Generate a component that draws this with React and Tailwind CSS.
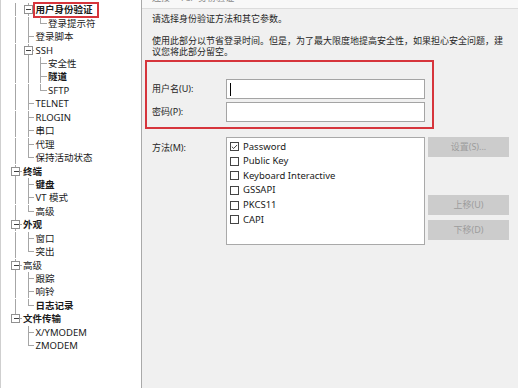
import { Check } from 'lucide-react'

const font = { fontFamily: '"Noto Sans", "Noto Sans CJK SC", sans-serif' }

const tree = [
  { t: '用户身份验证', c: ['l', 'xt'], b: true, hl: true },
  { t: '登录提示符', c: ['l', 'l', 'e'] },
  { t: '登录脚本', c: ['l', 't'] },
  { t: 'SSH', c: ['l', 'xt'] },
  { t: '安全性', c: ['l', 'l', 't'] },
  { t: '隧道', c: ['l', 'l', 't'], b: true },
  { t: 'SFTP', c: ['l', 'l', 'e'] },
  { t: 'TELNET', c: ['l', 't'] },
  { t: 'RLOGIN', c: ['l', 't'] },
  { t: '串口', c: ['l', 't'] },
  { t: '代理', c: ['l', 't'] },
  { t: '保持活动状态', c: ['l', 'e'] },
  { t: '终端', c: ['xt'], b: true },
  { t: '键盘', c: ['l', 't'], b: true },
  { t: 'VT 模式', c: ['l', 't'] },
  { t: '高级', c: ['l', 'e'] },
  { t: '外观', c: ['xt'], b: true },
  { t: '窗口', c: ['l', 't'] },
  { t: '突出', c: ['l', 'e'] },
  { t: '高级', c: ['xt'] },
  { t: '跟踪', c: ['l', 't'] },
  { t: '响铃', c: ['l', 't'] },
  { t: '日志记录', c: ['l', 'e'], b: true },
  { t: '文件传输', c: ['xe'], b: true },
  { t: 'X/YMODEM', c: [' ', 't'] },
  { t: 'ZMODEM', c: [' ', 'e'] },
]

const methods = [
  { t: 'Password', on: true },
  { t: 'Public Key' },
  { t: 'Keyboard Interactive' },
  { t: 'GSSAPI' },
  { t: 'PKCS11' },
  { t: 'CAPI' },
]

const H = 13.44
const CY = 6.72

// tree connector lines for one row
const Guides = ({ cols }) => (
  <svg width={cols.length * 12.5} height={H} className="shrink-0" shapeRendering="crispEdges">
    {cols.map((k, i) => {
      const cx = 6.5 + i * 12.5
      const stroke = '#a6a6a6'
      if (k === ' ') return null
      if (k === 'l') return <line key={i} x1={cx} x2={cx} y1={0} y2={H} stroke={stroke} />
      if (k === 't' || k === 'e')
        return (
          <g key={i}>
            <line x1={cx} x2={cx} y1={0} y2={k === 't' ? H : CY} stroke={stroke} />
            <line x1={cx} x2={cx + 6} y1={CY} y2={CY} stroke={stroke} />
          </g>
        )
      return (
        <g key={i}>
          <line x1={cx} x2={cx} y1={0} y2={CY - 4} stroke={stroke} />
          {k === 'xt' && <line x1={cx} x2={cx} y1={CY + 4} y2={H} stroke={stroke} />}
          <line x1={cx + 4} x2={cx + 6} y1={CY} y2={CY} stroke={stroke} />
          <rect x={cx - 4} y={CY - 4} width={8} height={8} fill="#fff" stroke="#919191" />
          <line x1={cx - 2} x2={cx + 3} y1={CY} y2={CY} stroke="#404040" />
        </g>
      )
    })}
  </svg>
)

const Tree = () => (
  <div className="flex flex-col pt-[3.3px] pl-[8px]">
    {tree.map((n, i) => (
      <div key={i} className="relative flex h-[13.44px] items-center">
        <Guides cols={n.c} />
        <span
          className={`ml-[1.5px] whitespace-nowrap text-[9.5px] leading-none text-[#1a1a1a] ${n.b ? 'font-bold' : ''}`}
        >
          {n.t}
        </span>
        {n.hl && (
          <span className="absolute left-[24px] top-[-1.5px] h-[16px] w-[66px] border-2 border-[#d6353c]" />
        )}
      </div>
    ))}
  </div>
)

const Button = ({ children }) => (
  <div className="flex h-[20px] w-[81px] items-center justify-center bg-[#cccccc] text-[9px] text-[#9c9c9c]">
    {children}
  </div>
)

export default function App() {
  return (
    <div className="flex h-[388px] w-[518px] overflow-hidden bg-[#f0f0f0]" style={font}>
      <aside className="h-full w-[142px] shrink-0 border-l border-r border-l-[#cfcfcf] border-r-[#a9a9a9] bg-white">
        <Tree />
      </aside>

      <main className="flex min-w-0 flex-1 flex-col">
        <div className="h-[9px] overflow-hidden border-b border-[#dcdcdc] bg-[#f8f8f8] pl-[10px]">
          <p className="-mt-[8px] text-[9px] leading-[11px] text-[#8a8a8a]">连接 &gt; TCP 身份验证</p>
        </div>

        <div className="flex flex-col pl-[10px] text-[9px] text-[#262626]">
          <p className="mt-[4px] leading-[12px]">请选择身份验证方法和其它参数。</p>
          <p className="mt-[9.5px] w-[358px] leading-[11px]">
            使用此部分以节省登录时间。但是，为了最大限度地提高安全性，如果担心安全问题，建议您将此部分留空。
          </p>

          <div className="-ml-[7px] mt-[3.5px] flex h-[69px] w-[289px] flex-col gap-[3px] border-2 border-[#d6353c] pl-[5px] pt-[17px]">
            <div className="flex items-center">
              <span className="w-[74px]">用户名(U):</span>
              <div className="flex h-[20px] w-[199px] items-center border border-[#a4a4a4] bg-white pl-[3px]">
                <span className="h-[13px] w-px bg-black" />
              </div>
            </div>
            <div className="flex items-center">
              <span className="w-[74px]">密码(P):</span>
              <div className="h-[20px] w-[199px] border border-[#a4a4a4] bg-white" />
            </div>
          </div>

          <div className="mt-[8px] flex">
            <span className="w-[74px] pt-[4px]">方法(M):</span>
            <div className="flex h-[108px] w-[199px] flex-col border border-[#a9a9a9] bg-white pl-[3px] pt-[1.5px]">
              {methods.map((m) => (
                <div key={m.t} className="flex h-[14.6px] items-center gap-[4px]">
                  <span className="flex size-[9px] items-center justify-center border border-[#444] bg-white">
                    {m.on && <Check className="size-[8px] text-[#222]" strokeWidth={3} />}
                  </span>
                  <span className="text-[9.5px] text-[#1a1a1a]">{m.t}</span>
                </div>
              ))}
            </div>
            <div className="ml-[3px] flex flex-col">
              <Button>设置(S)...</Button>
              <div className="mt-[38px] flex flex-col gap-[5px]">
                <Button>上移(U)</Button>
                <Button>下移(D)</Button>
              </div>
            </div>
          </div>
        </div>
      </main>
    </div>
  )
}
